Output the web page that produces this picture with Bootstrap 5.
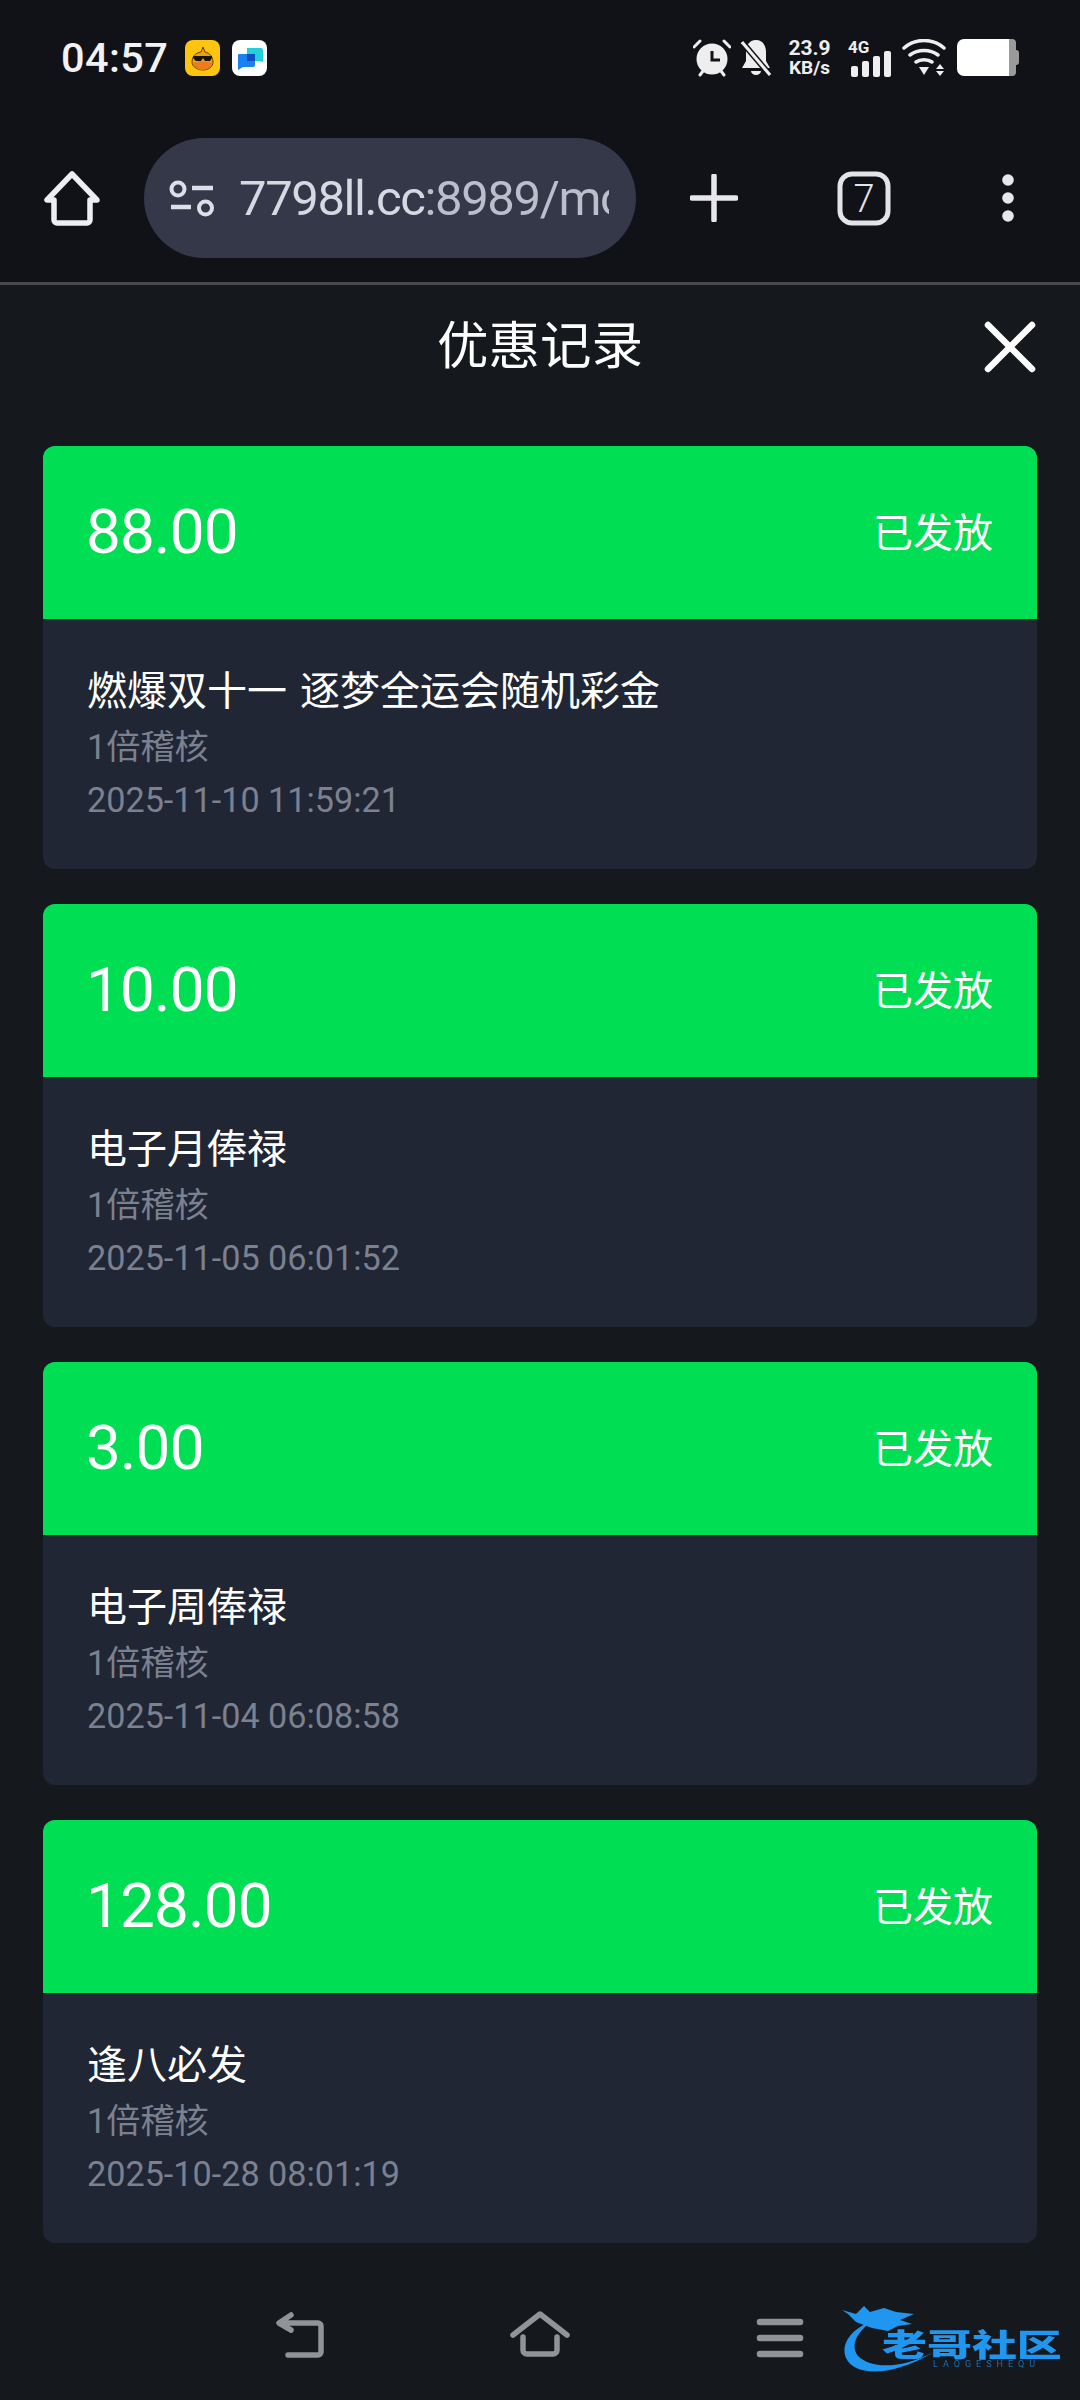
<!DOCTYPE html>
<html lang="zh">
<head>
<meta charset="utf-8">
<link href="https://cdn.jsdelivr.net/npm/bootstrap@5.3.0/dist/css/bootstrap.min.css" rel="stylesheet">
<style>
html,body{background:#15191e;}
body{width:1080px;height:2400px;overflow:hidden;font-family:Roboto,"Noto Sans CJK SC",sans-serif;color:#fff;position:relative;}
.top-chrome{background:#111217;height:282px;}
.status-row{height:116px;padding:0 60px 0 61px;}
.clock{font:500 41.5px/1 Roboto,sans-serif;color:#f2f2f4;letter-spacing:.4px;width:124px;white-space:nowrap;}
.app-ico{width:35px;height:36px;display:block;}
.app-ico+.app-ico{margin-left:12px;}
.sb-ico{display:block;flex:none;}
.speed{width:43px;font:700 21px/19px Roboto,sans-serif;color:#eee;text-align:center;white-space:nowrap;display:flex;flex-direction:column;align-items:center;margin:0 17px;}
.speed span+span{font-size:19px;}
.net-wrap{width:43px;height:38px;position:relative;flex:none;}
.net-tag{position:absolute;left:0;top:0;font:700 17px/1 Roboto,sans-serif;color:#eee;}
.tool-row{height:164px;}
.tool-cell{display:flex;justify-content:center;flex:none;}
.cell-a{width:144px;}
.cell-b{width:156px;}
.url-pill{width:492px;height:120px;flex:none;border-radius:60px;background:#353849;display:flex;align-items:center;padding-left:25px;overflow:hidden;}
.url-text{width:370px;margin-left:24px;overflow:hidden;white-space:nowrap;font:400 49px/1 Roboto,sans-serif;letter-spacing:-1.4px;color:#d6d8e2;}
.url-dim{color:#bcbecb;}
.hairline{height:3px;background:#46484c;}
.head-row{height:161px;position:relative;padding-top:31px;}
.head-title{font:400 51.5px/52px "Noto Sans CJK SC",sans-serif;color:#fff;}
.head-close{position:absolute;right:44px;top:36px;}
.rec-list{padding:0 43px;display:flex;flex-direction:column;gap:35px;}
.rec-card{background:#202633;border:0;border-radius:12px;overflow:hidden;height:423px;}
.rec-head{background:#00de54;height:173px;padding:0 44px;color:#fff;}
.rec-amt{font:400 62px/1 Roboto,sans-serif;letter-spacing:-.8px;margin-left:-1px;padding-bottom:2px;}
.rec-state{font:400 40px/1 "Noto Sans CJK SC",sans-serif;padding-bottom:5px;}
.rec-body{padding:39px 44px 0;}
.rec-name{font:400 40px/60px "Noto Sans CJK SC",sans-serif;word-spacing:4px;color:#fff;margin-bottom:3px;}
.rec-meta{font:400 34.2px/53px Roboto,"Noto Sans CJK SC",sans-serif;color:#7b8190;}
.nav-ico{position:absolute;}
.logo{position:absolute;left:838px;top:2300px;width:240px;height:92px;filter:blur(.5px);}
.logo-zh{position:absolute;left:44px;top:27px;font:900 31px/1 "Noto Sans CJK SC",sans-serif;color:#1f97f0;letter-spacing:0;white-space:nowrap;transform:scaleX(1.45);transform-origin:0 50%;}
.logo-en{position:absolute;left:95px;top:60px;font:400 9px/1 Roboto,sans-serif;letter-spacing:5px;color:#1b6fb4;white-space:nowrap;}
</style>
</head>
<body>
<div class="top-chrome">
  <div class="status-row d-flex align-items-center">
    <div class="clock">04:57</div>
    <svg class="app-ico" viewBox="0 0 35 36"><rect width="35" height="36" rx="8" fill="#fdc50f"/><path d="M18 7l2 5c5 1 8 5 8 10 0 5-5 8-10 8s-11-3-11-8c0-5 3-9 9-10z" fill="#eda10f" stroke="#6b3d00" stroke-width="1"/><path d="M8 23c4-2 15-2 19 0-1 4-5 7-9.500 7S9 27 8 23z" fill="#ef7a1a"/><path d="M8 16h19v2l-2 3h-5l-2-3-2 3h-5l-3-3z" fill="#141414"/></svg>
    <svg class="app-ico" viewBox="0 0 35 36"><rect width="35" height="36" rx="8" fill="#fff"/><path d="M15 8h14a2 2 0 0 1 2 2v12l-4-1h-12z" fill="#22cfdb"/><path d="M7 14h14a2 2 0 0 1 2 2v9a2 2 0 0 1-2 2H11l-5 3V15a1 1 0 0 1 1-1z" fill="#1a82f0"/><rect x="15" y="14" width="8" height="7" fill="#0f4fc0"/></svg>
    <div class="d-flex align-items-center ms-auto">
      <svg class="sb-ico" width="38" height="38" viewBox="0 0 38 38"><path d="M1 8l6-6M37 8l-6-6M7 36l3-4M31 36l-3-4" stroke="#eee" stroke-width="3" stroke-linecap="round"/><circle cx="19" cy="20" r="15.500" fill="#eee"/><path d="M19 12v9h8" stroke="#111217" stroke-width="3" fill="none"/></svg>
      <svg class="sb-ico" style="margin-left:10px" width="30" height="38" viewBox="0 0 30 38"><path d="M15 1c7 0 10 6 10 12v9l4 7H1l4-7v-9C5 7 8 1 15 1z" fill="#eee"/><path d="M10 32h10a5 4 0 0 1-10 0z" fill="#eee"/><path d="M1 3l28 33" stroke="#111217" stroke-width="6"/><path d="M1 3l28 33" stroke="#eee" stroke-width="3"/></svg>
      <div class="speed"><span>23.9</span><span>KB/s</span></div>
      <div class="net-wrap">
        <div class="net-tag">4G</div>
        <svg class="position-absolute bottom-0 end-0" width="40" height="26" viewBox="0 0 40 26"><rect x="0" y="15" width="7" height="11" rx="2" fill="#eee"/><rect x="11" y="10" width="7" height="16" rx="2" fill="#eee"/><rect x="22" y="5" width="7" height="21" rx="2" fill="#eee"/><rect x="33" y="0" width="7" height="26" rx="2" fill="#eee"/></svg>
      </div>
      <svg class="sb-ico" style="margin-left:11px" width="44" height="38" viewBox="0 0 44 38"><path d="M2 9c11-10 29-10 40 0M8 16c8-6 20-6 28 0M14 23c4-3 12-3 16 0" stroke="#eee" stroke-width="3.500" fill="none" stroke-linecap="round"/><path d="M17 28h10l-5 8zM38 25l4 5h-8zM38 37l4-5h-8z" fill="#eee"/></svg>
      <svg class="sb-ico" style="margin-left:11px" width="63" height="38" viewBox="0 0 63 38"><path d="M7 0h45v37H7a7 7 0 0 1-7-7V7a7 7 0 0 1 7-7z" fill="#fff"/><path d="M52 0h3a4 4 0 0 1 4 4v7a3 3 0 0 1 3 3v9a3 3 0 0 1-3 3v7a4 4 0 0 1-4 4h-3z" fill="#9a9a9a"/></svg>
    </div>
  </div>
  <div class="tool-row d-flex align-items-center">
    <div class="tool-cell cell-a">
      <svg width="56" height="56" viewBox="0 0 56 56"><path d="M28 4L3 30h7v20a3 3 0 0 0 3 3h30a3 3 0 0 0 3-3V30h7z" fill="none" stroke="#eeeef2" stroke-width="5.500" stroke-linejoin="round" stroke-linecap="round"/></svg>
    </div>
    <div class="url-pill">
      <svg width="46" height="38" viewBox="0 0 46 38"><circle cx="9" cy="10" r="6.500" fill="none" stroke="#dedfe8" stroke-width="4"/><circle cx="36.500" cy="29" r="6.500" fill="none" stroke="#dedfe8" stroke-width="4"/><path d="M23 9h21M2 28h20" stroke="#dedfe8" stroke-width="4.500"/></svg>
      <div class="url-text">7798ll.cc<span class="url-dim">:8989/mc</span></div>
    </div>
    <div class="tool-cell cell-b">
      <svg width="48" height="48" viewBox="0 0 48 48"><path d="M24 2v44M2 24h44" stroke="#e6e6ec" stroke-width="5.500" stroke-linecap="round"/></svg>
    </div>
    <div class="tool-cell cell-a">
      <svg width="54" height="55" viewBox="0 0 54 55"><rect x="3" y="3" width="48" height="49" rx="12" fill="none" stroke="#e3e3ea" stroke-width="5"/><text x="27" y="41" text-anchor="middle" font-family="Roboto" font-weight="300" font-size="38" fill="#e3e3ea">7</text></svg>
    </div>
    <div class="tool-cell cell-a">
      <svg width="12" height="48" viewBox="0 0 12 48"><circle cx="6" cy="6" r="5.800" fill="#e6e6ec"/><circle cx="6" cy="24" r="5.800" fill="#e6e6ec"/><circle cx="6" cy="42" r="5.800" fill="#e6e6ec"/></svg>
    </div>
  </div>
</div>
<div class="hairline"></div>
<div class="head-row d-flex align-items-start justify-content-center">
  <div class="head-title">优惠记录</div>
  <svg class="head-close" width="52" height="52" viewBox="0 0 52 52"><path d="M4 4l44 44M48 4L4 48" stroke="#fff" stroke-width="6.500" stroke-linecap="round"/></svg>
</div>
<div class="rec-list">
  <div class="card rec-card">
    <div class="rec-head d-flex justify-content-between align-items-center"><div class="rec-amt">88.00</div><div class="rec-state">已发放</div></div>
    <div class="rec-body"><div class="rec-name">燃爆双十一 逐梦全运会随机彩金</div><div class="rec-meta">1倍稽核</div><div class="rec-meta">2025-11-10 11:59:21</div></div>
  </div>
  <div class="card rec-card">
    <div class="rec-head d-flex justify-content-between align-items-center"><div class="rec-amt">10.00</div><div class="rec-state">已发放</div></div>
    <div class="rec-body"><div class="rec-name">电子月俸禄</div><div class="rec-meta">1倍稽核</div><div class="rec-meta">2025-11-05 06:01:52</div></div>
  </div>
  <div class="card rec-card">
    <div class="rec-head d-flex justify-content-between align-items-center"><div class="rec-amt">3.00</div><div class="rec-state">已发放</div></div>
    <div class="rec-body"><div class="rec-name">电子周俸禄</div><div class="rec-meta">1倍稽核</div><div class="rec-meta">2025-11-04 06:08:58</div></div>
  </div>
  <div class="card rec-card">
    <div class="rec-head d-flex justify-content-between align-items-center"><div class="rec-amt">128.00</div><div class="rec-state">已发放</div></div>
    <div class="rec-body"><div class="rec-name">逢八必发</div><div class="rec-meta">1倍稽核</div><div class="rec-meta">2025-10-28 08:01:19</div></div>
  </div>
</div>
<svg class="nav-ico" style="left:275px;top:2312px" width="50" height="46" viewBox="0 0 50 46"><path d="M5 11h38a3 3 0 0 1 3 3v26a3 3 0 0 1-3 3H13M16 3L4 11l12 7" fill="none" stroke="#919396" stroke-width="5.500" stroke-linecap="round" stroke-linejoin="round"/></svg>
<svg class="nav-ico" style="left:510px;top:2311px" width="60" height="46" viewBox="0 0 60 46"><path d="M3 24L30 3l27 21M13 26v13a4 4 0 0 0 4 4h26a4 4 0 0 0 4-4V26" fill="none" stroke="#919396" stroke-width="5.500" stroke-linecap="round" stroke-linejoin="round"/></svg>
<svg class="nav-ico" style="left:756px;top:2317px" width="48" height="42" viewBox="0 0 48 42"><path d="M4 5h40M4 21h40M4 37h40" stroke="#919396" stroke-width="6.500" stroke-linecap="round"/></svg>
<div class="logo">
  <svg class="position-absolute top-0 start-0" width="110" height="92" viewBox="0 0 110 92"><path d="M36 20C14 28 2 44 8 58c8 18 44 20 88-6-30 16-62 18-76 4-8-10-2-24 16-36z" fill="#1f97f0"/><path d="M4 10l14 4 8-8 6 6 14-4 12 4 18 2-14 6 12 4-14 2-10 5-16-3-16-6-8-8z" fill="#1f97f0"/></svg>
  <div class="logo-zh">老哥社区</div>
  <div class="logo-en">LAOGESHEQU</div>
</div>
</body>
</html>
